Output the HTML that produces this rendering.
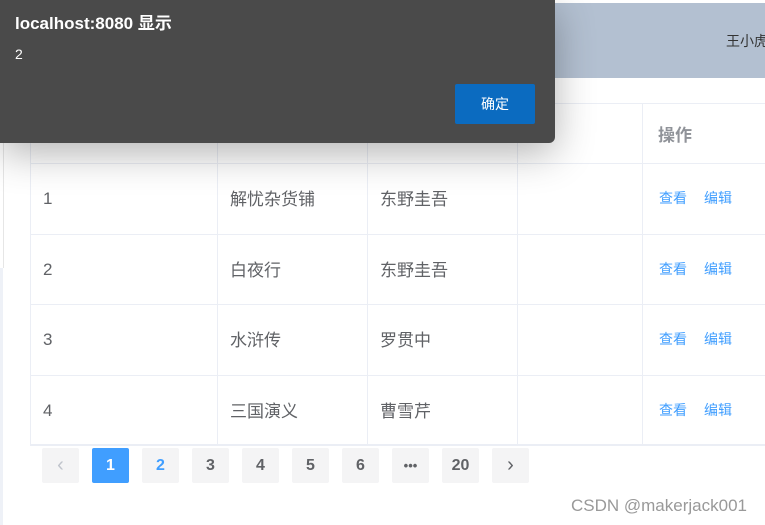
<!DOCTYPE html>
<html><head><meta charset="utf-8"><style>
*{margin:0;padding:0;box-sizing:border-box}
body{width:765px;height:525px;overflow:hidden;background:#fff;position:relative;font-family:"Liberation Sans","Noto Sans CJK SC",sans-serif}
.a{position:absolute}
.hl{position:absolute;height:1px;background:#ebeef5}
.vl{position:absolute;width:1px;background:#ebeef5}
.t{position:absolute;font-size:17px;color:#606266}
.n{position:absolute;font-size:17px;color:#606266}
.op{position:absolute;font-size:14px;color:#409eff}
.pg{position:absolute;top:448px;width:37px;height:35px;background:#f4f4f5;border-radius:2px;font-size:16px;font-weight:bold;color:#606266;text-align:center;line-height:35px}
</style></head><body>
<div class="a" style="left:0;top:268px;width:3px;height:257px;background:#eef1f7"></div>
<div class="a" style="left:3px;top:0;width:1px;height:268px;background:#e6e6e6"></div>
<div class="a" style="left:555px;top:3px;width:210px;height:75px;background:#b3c0d1"></div>
<div class="a" style="left:726px;top:31px;font-size:14px;color:#333;white-space:nowrap">王小虎</div>

<div class="hl" style="left:30px;top:103px;width:735px"></div>
<div class="hl" style="left:30px;top:163px;width:735px"></div>
<div class="hl" style="left:30px;top:234px;width:735px"></div>
<div class="hl" style="left:30px;top:304px;width:735px"></div>
<div class="hl" style="left:30px;top:375px;width:735px"></div>
<div class="hl" style="left:30px;top:444px;width:735px;height:2px"></div>
<div class="vl" style="left:30px;top:103px;height:342px"></div>
<div class="vl" style="left:217px;top:103px;height:342px"></div>
<div class="vl" style="left:367px;top:103px;height:342px"></div>
<div class="vl" style="left:517px;top:103px;height:342px"></div>
<div class="vl" style="left:642px;top:103px;height:342px"></div>
<div class="a" style="left:658px;top:121px;font-size:17px;font-weight:bold;color:#909399">操作</div>

<div class="n" style="left:43px;top:189px">1</div><div class="t" style="left:230px;top:185px">解忧杂货铺</div><div class="t" style="left:380px;top:185px">东野圭吾</div>
<div class="n" style="left:43px;top:260px">2</div><div class="t" style="left:230px;top:256px">白夜行</div><div class="t" style="left:380px;top:256px">东野圭吾</div>
<div class="n" style="left:43px;top:330px">3</div><div class="t" style="left:230px;top:326px">水浒传</div><div class="t" style="left:380px;top:326px">罗贯中</div>
<div class="n" style="left:43px;top:401px">4</div><div class="t" style="left:230px;top:397px">三国演义</div><div class="t" style="left:380px;top:397px">曹雪芹</div>
<div class="op" style="left:659px;top:188px">查看</div><div class="op" style="left:704px;top:188px">编辑</div>
<div class="op" style="left:659px;top:259px">查看</div><div class="op" style="left:704px;top:259px">编辑</div>
<div class="op" style="left:659px;top:329px">查看</div><div class="op" style="left:704px;top:329px">编辑</div>
<div class="op" style="left:659px;top:400px">查看</div><div class="op" style="left:704px;top:400px">编辑</div>

<div class="pg" style="left:42px;color:#c0c4cc;font-weight:normal;font-size:20px">‹</div>
<div class="pg" style="left:92px;background:#409eff;color:#fff">1</div>
<div class="pg" style="left:142px;color:#409eff">2</div>
<div class="pg" style="left:192px">3</div>
<div class="pg" style="left:242px">4</div>
<div class="pg" style="left:292px">5</div>
<div class="pg" style="left:342px">6</div>
<div class="pg" style="left:392px;font-size:13px">•••</div>
<div class="pg" style="left:442px">20</div>
<div class="pg" style="left:492px;font-weight:normal;font-size:20px">›</div>
<div class="a" style="left:571px;top:496px;font-size:17px;color:#999;white-space:nowrap">CSDN @makerjack001</div>

<div class="a" style="left:0;top:0;width:555px;height:143px;background:#4a4a4a;border-radius:0 0 6px 0;box-shadow:0 10px 40px rgba(0,0,0,0.3)">
<div class="a" style="left:15px;top:9px;font-size:17px;font-weight:bold;color:#fff;white-space:nowrap">localhost:8080 显示</div>
<div class="a" style="left:15px;top:46px;font-size:14px;color:#fff">2</div>
<div class="a" style="left:455px;top:84px;width:80px;height:40px;background:#0b6bc0;border-radius:2px;color:#fff;font-size:14px;text-align:center;line-height:40px">确定</div>
</div>
</body></html>
